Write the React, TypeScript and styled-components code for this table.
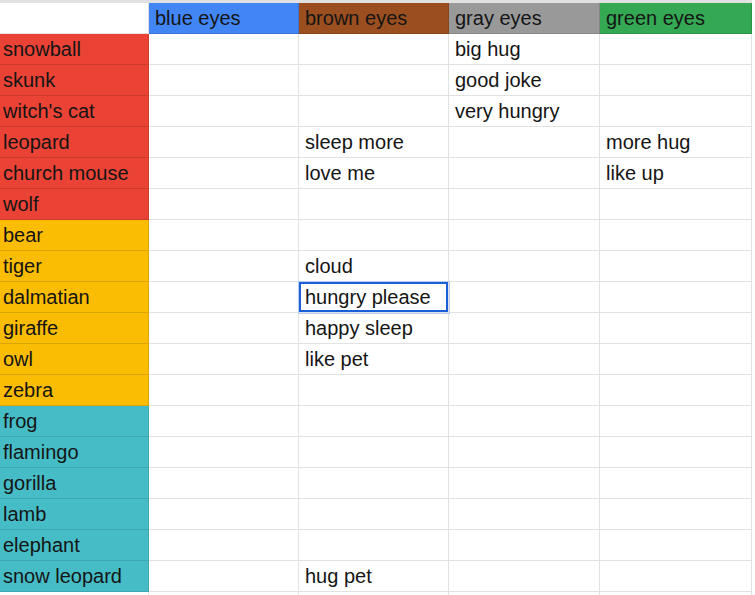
import React from 'react';
import styled, { createGlobalStyle } from 'styled-components';

const GlobalStyle = createGlobalStyle`
  body {
    margin: 0;
    background: #ffffff;
    font-family: 'Liberation Sans', Arial, sans-serif;
  }
`;

const Sheet = styled.div`
  display: grid;
  grid-template-columns: 149px 150px 150px 151px 152px;
  grid-auto-rows: 31px;
  border-top: 3px solid #e1e1e1;
  width: 752px;
`;

const Cell = styled.div<{ $bg?: string; $first?: boolean; $selected?: boolean }>`
  box-sizing: border-box;
  position: relative;
  display: flex;
  align-items: center;
  padding: 1px ${(p) => (p.$first ? '3px' : '6px')} 0;
  font-size: 20px;
  color: #151515;
  white-space: nowrap;
  background: ${(p) => p.$bg || '#ffffff'};
  border-right: 1px solid ${(p) => (p.$bg ? 'rgba(0,0,0,0.12)' : '#e2e2e2')};
  border-bottom: 1px solid ${(p) => (p.$bg ? 'rgba(0,0,0,0.12)' : '#e2e2e2')};
  ${(p) =>
    p.$selected &&
    `
    z-index: 2;
    box-shadow: inset 0 0 0 2px #1a5fd6, 0 0 0 1px #b6cdf5;
  `}
`;

const RED = '#ea4335';
const AMBER = '#fbbc04';
const TEAL = '#46bdc6';

const headers: { label: string; bg?: string }[] = [
  { label: '' },
  { label: 'blue eyes', bg: '#4285f4' },
  { label: 'brown eyes', bg: '#9b4f20' },
  { label: 'gray eyes', bg: '#999999' },
  { label: 'green eyes', bg: '#34a853' },
];

type Row = { name: string; bg?: string; values: string[] };

const rows: Row[] = [
  { name: 'snowball', bg: RED, values: ['', '', 'big hug', ''] },
  { name: 'skunk', bg: RED, values: ['', '', 'good joke', ''] },
  { name: "witch's cat", bg: RED, values: ['', '', 'very hungry', ''] },
  { name: 'leopard', bg: RED, values: ['', 'sleep more', '', 'more hug'] },
  { name: 'church mouse', bg: RED, values: ['', 'love me', '', 'like up'] },
  { name: 'wolf', bg: RED, values: ['', '', '', ''] },
  { name: 'bear', bg: AMBER, values: ['', '', '', ''] },
  { name: 'tiger', bg: AMBER, values: ['', 'cloud', '', ''] },
  { name: 'dalmatian', bg: AMBER, values: ['', 'hungry please', '', ''] },
  { name: 'giraffe', bg: AMBER, values: ['', 'happy sleep', '', ''] },
  { name: 'owl', bg: AMBER, values: ['', 'like pet', '', ''] },
  { name: 'zebra', bg: AMBER, values: ['', '', '', ''] },
  { name: 'frog', bg: TEAL, values: ['', '', '', ''] },
  { name: 'flamingo', bg: TEAL, values: ['', '', '', ''] },
  { name: 'gorilla', bg: TEAL, values: ['', '', '', ''] },
  { name: 'lamb', bg: TEAL, values: ['', '', '', ''] },
  { name: 'elephant', bg: TEAL, values: ['', '', '', ''] },
  { name: 'snow leopard', bg: TEAL, values: ['', 'hug pet', '', ''] },
  { name: '', values: ['', '', '', ''] },
];

const App: React.FC = () => {
  return (
    <>
      <GlobalStyle />
      <Sheet>
        {headers.map((h, i) => (
          <Cell key={`h_${i}`} $bg={h.bg} $first={i === 0}>
            {h.label}
          </Cell>
        ))}
        {rows.map((r, ri) => (
          <React.Fragment key={`r_${ri}`}>
            <Cell $bg={r.bg} $first>
              {r.name}
            </Cell>
            {r.values.map((v, ci) => (
              <Cell key={`${ri}_${ci}`} $selected={ri === 8 && ci === 1}>
                {v}
              </Cell>
            ))}
          </React.Fragment>
        ))}
      </Sheet>
    </>
  );
};

export default App;
